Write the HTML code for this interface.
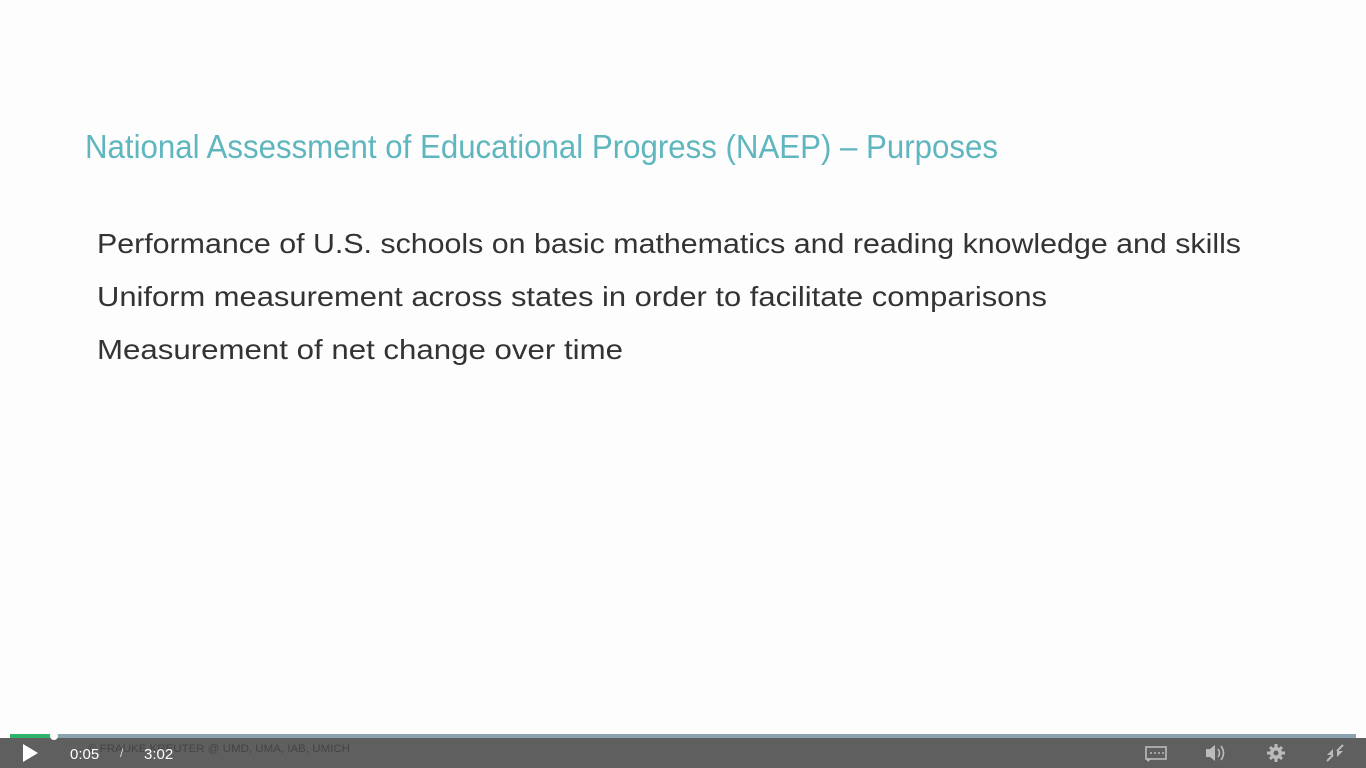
<!DOCTYPE html>
<html><head><style>
html,body{margin:0;padding:0;width:1366px;height:768px;overflow:hidden;background:#fdfdfe;}
svg{display:block}
</style></head><body>
<svg width="1366" height="768" xmlns="http://www.w3.org/2000/svg" font-family="Liberation Sans, sans-serif">
<rect width="1366" height="768" fill="#fdfdfe"/>
<text x="85" y="158" font-size="33" fill="#5fb6be" textLength="913" lengthAdjust="spacingAndGlyphs">National Assessment of Educational Progress (NAEP) – Purposes</text>
<g font-size="28" fill="#333">
<text x="97" y="253" textLength="1144" lengthAdjust="spacingAndGlyphs">Performance of U.S. schools on basic mathematics and reading knowledge and skills</text>
<text x="97" y="306" textLength="950" lengthAdjust="spacingAndGlyphs">Uniform measurement across states in order to facilitate comparisons</text>
<text x="97" y="359" textLength="526" lengthAdjust="spacingAndGlyphs">Measurement of net change over time</text>
</g>
<rect x="0" y="738" width="1366" height="30" fill="#5f5f5f"/>
<rect x="10" y="734" width="1346" height="4" fill="#8aa3b0"/>
<rect x="10" y="734" width="43" height="4" fill="#2fb36a"/>
<circle cx="54" cy="736" r="4" fill="#fff"/>
<text x="88" y="752" font-size="11" fill="#444" textLength="262" lengthAdjust="spacingAndGlyphs">© FRAUKE KREUTER @ UMD, UMA, IAB,  UMICH</text>
<path d="M23 744 L38 753 L23 762 Z" fill="#fff"/>
<text x="70" y="759" font-size="15" fill="#fff">0:05</text>
<text x="120" y="757" font-size="12" fill="#ddd">/</text>
<text x="144" y="759" font-size="15" fill="#fff">3:02</text>
<g fill="none" stroke="#bbb" stroke-width="1.6">
<rect x="1146" y="747" width="20" height="12"/>
</g>
<path d="M1150 753h2M1154 753h2M1158 753h2M1162 753h2" stroke="#bbb" stroke-width="1.6"/>
<path d="M1146 759 L1148 762 L1151 759" fill="#bbb"/>
<path d="M1206 749h4l5-4v16l-5-4h-4z" fill="#bbb"/>
<path d="M1218 749q3 4 0 8M1221 746q5 7 0 14" stroke="#bbb" stroke-width="1.6" fill="none"/>
<circle cx="1276" cy="753" r="6" fill="#bbb"/>
<g stroke="#bbb" stroke-width="3"><path d="M1276 744v18M1267 753h18M1270 747l12 12M1282 747l-12 12"/></g>
<circle cx="1276" cy="753" r="2.5" fill="#5f5f5f"/>
<path d="M1327 761l6-6M1337 751l6-6" stroke="#bbb" stroke-width="2"/>
<path d="M1333 749v6h-6z M1337 757v-6h6z" fill="#bbb"/>
</svg>
</body></html>
